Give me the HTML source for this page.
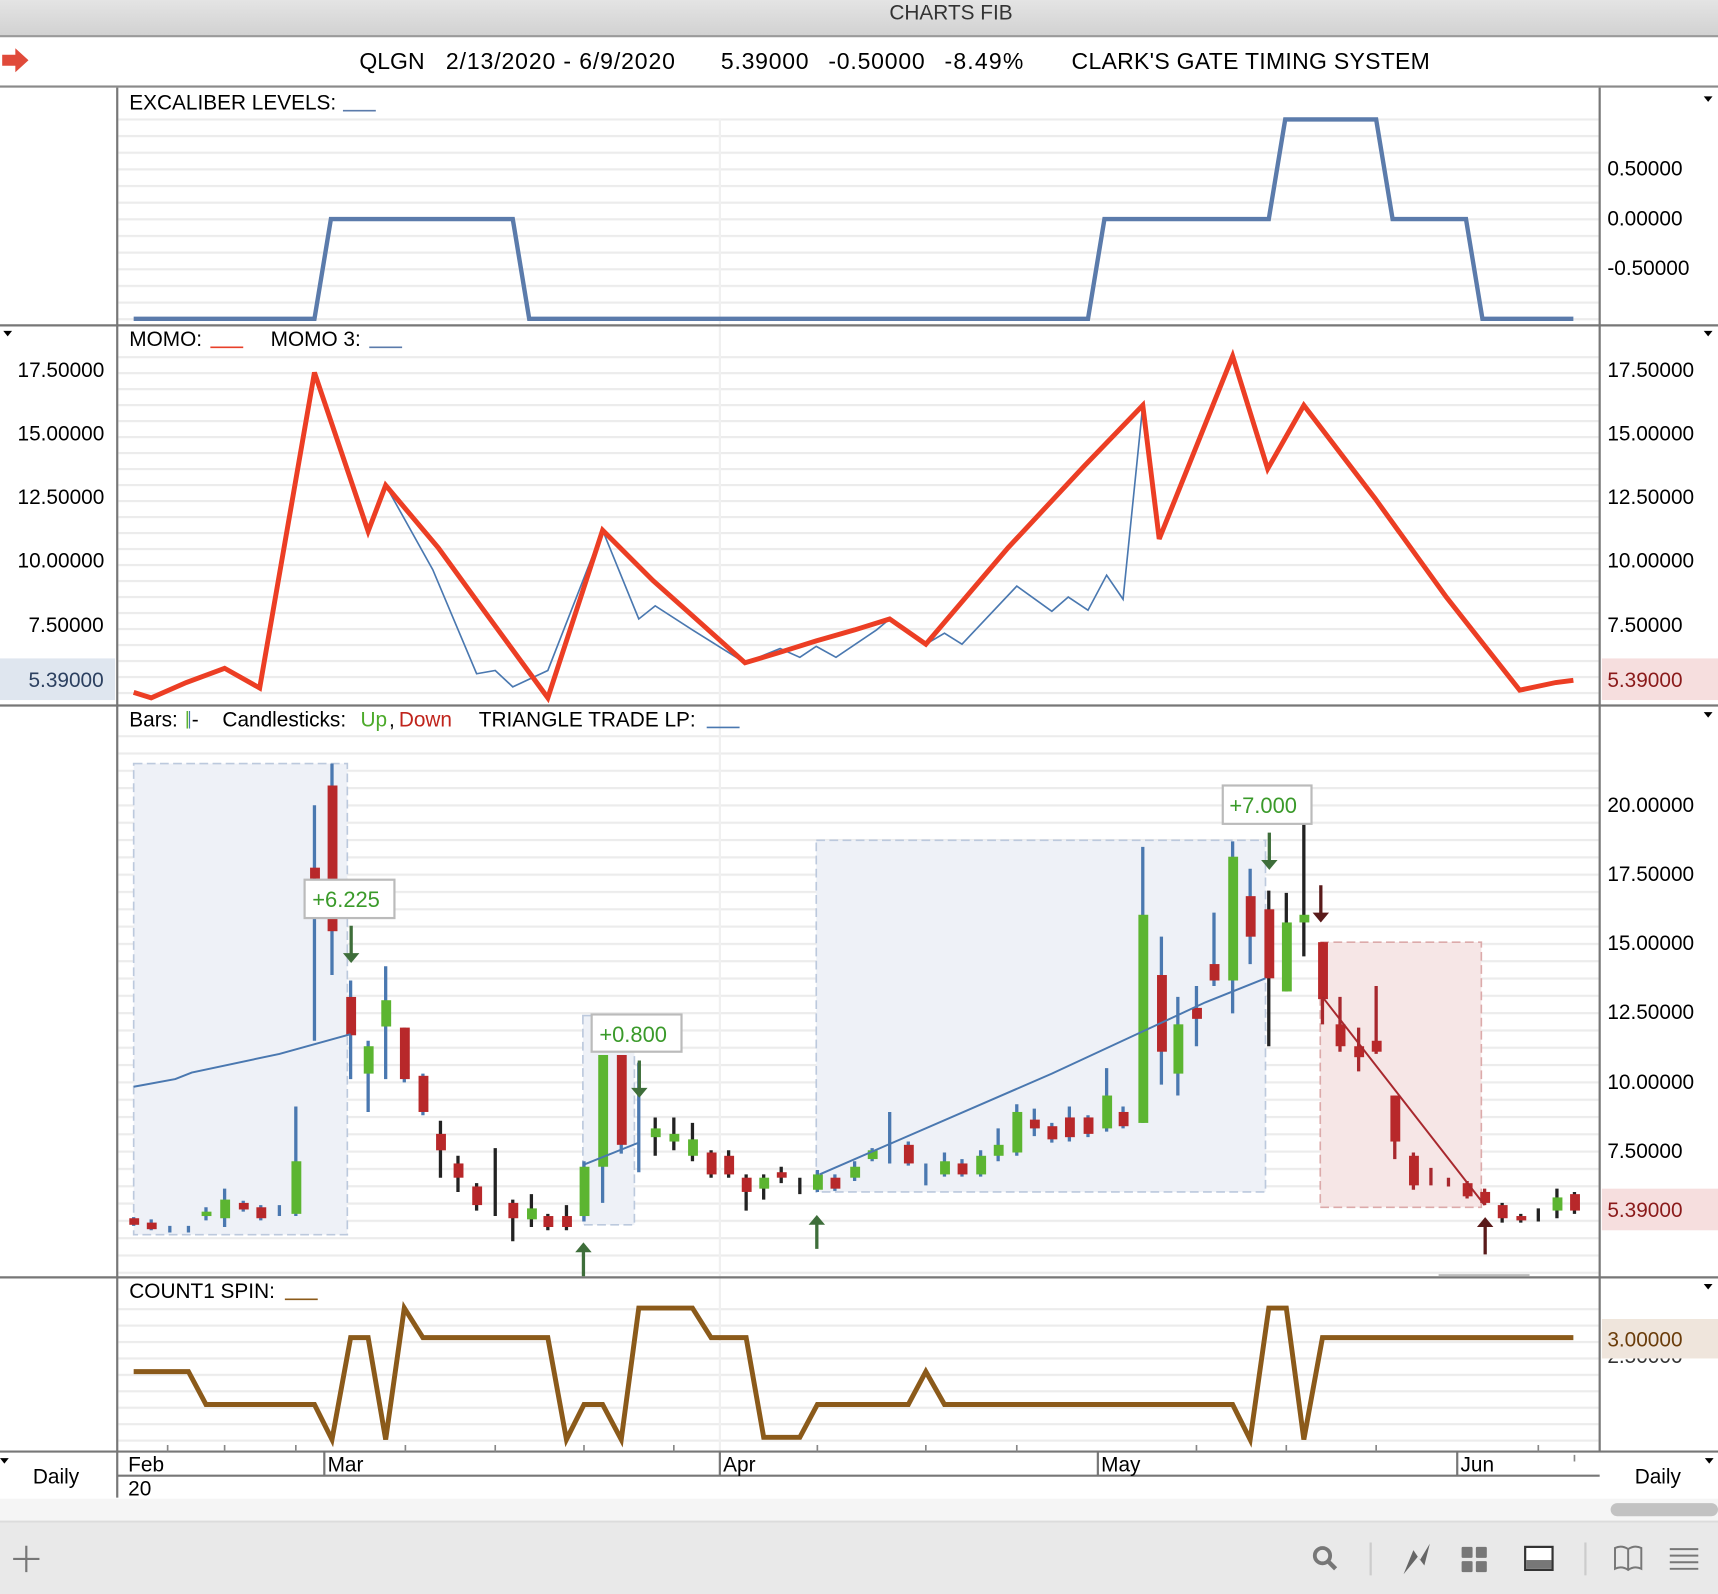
<!DOCTYPE html>
<html><head><meta charset="utf-8"><style>
html,body{margin:0;padding:0;background:#fff;overflow:hidden}
svg{display:block}
text{font-family:"Liberation Sans",sans-serif}
</style></head><body>
<svg width="1718" height="1594" viewBox="0 0 1568 1455" preserveAspectRatio="none" xmlns="http://www.w3.org/2000/svg">
<defs>
<linearGradient id="tb" x1="0" y1="0" x2="0" y2="1"><stop offset="0" stop-color="#e4e4e4"/><stop offset="1" stop-color="#d2d2d2"/></linearGradient>
<pattern id="g1" width="10" height="15.2" patternUnits="userSpaceOnUse" y="108"><rect width="10" height="2" fill="#ececec"/></pattern>
<pattern id="g2" width="10" height="14.6" patternUnits="userSpaceOnUse" y="325"><rect width="10" height="2" fill="#ececec"/></pattern>
<pattern id="g3" width="10" height="15.8" patternUnits="userSpaceOnUse" y="671"><rect width="10" height="2" fill="#ececec"/></pattern>
<pattern id="g4" width="10" height="15" patternUnits="userSpaceOnUse" y="1194"><rect width="10" height="2" fill="#ececec"/></pattern>
</defs>
<rect x="0" y="0" width="1568" height="32" fill="url(#tb)"/>
<text x="868" y="18" font-size="19" text-anchor="middle" fill="#333">CHARTS FIB</text>
<rect x="0" y="32" width="1568" height="2" fill="#9a9a9a"/>
<path d="M2 50h12v-6l12 11-12 11v-6H2z" fill="#e04a3a"/>
<g font-size="21" fill="#000">
<text x="328" y="63">QLGN</text>
<text x="407" y="63" textLength="209">2/13/2020 - 6/9/2020</text>
<text x="658" y="63" textLength="80">5.39000</text>
<text x="756" y="63" textLength="88">-0.50000</text>
<text x="862" y="63" textLength="72">-8.49%</text>
<text x="978" y="63" textLength="327">CLARK'S GATE TIMING SYSTEM</text>
</g>
<rect x="0" y="78" width="1568" height="2" fill="#8a8a8a"/>
<rect x="108" y="108" width="1351" height="185" fill="url(#g1)"/>
<rect x="108" y="325" width="1351" height="316" fill="url(#g2)"/>
<rect x="108" y="671" width="1351" height="492" fill="url(#g3)"/>
<rect x="108" y="1194" width="1351" height="130" fill="url(#g4)"/>
<path d="M657 108V1325" stroke="#f0f0f0" stroke-width="2"/>
<path d="M107 80V1367M1460 80V1325" stroke="#777" stroke-width="2"/>
<path d="M0 297H1568M0 644H1568M0 1166H1568" stroke="#777" stroke-width="2"/>
<path d="M0 1325H1568M107 1347H1460" stroke="#777" stroke-width="2"/>
<text x="118" y="100" font-size="19">EXCALIBER LEVELS:</text><path d="M313 101h30" stroke="#5b7bab" stroke-width="1.5"/>
<polyline fill="none" stroke="#5b7bab" stroke-width="4" points="122,291 287,291 302,200 468,200 483,291 993,291 1008,200 1158,200 1173,109 1256,109 1271,200 1338,200 1353,291 1436,291"/>
<text x="1467" y="160" font-size="19">0.50000</text><text x="1467" y="206" font-size="19">0.00000</text><text x="1467" y="251" font-size="19">-0.50000</text>
<path d="M1555 88h8l-4 5z" fill="#000"/>
<text x="118" y="316" font-size="19">MOMO:</text><path d="M192 317h30" stroke="#e8402a" stroke-width="1.5"/>
<text x="247" y="316" font-size="19">MOMO 3:</text><path d="M337 317h30" stroke="#5b7bab" stroke-width="1.5"/>
<path d="M3 302h8l-4 5z" fill="#000"/><path d="M1555 302h8l-4 5z" fill="#000"/>
<g font-size="19"><text x="16" y="344">17.50000</text><text x="16" y="402">15.00000</text><text x="16" y="460">12.50000</text><text x="16" y="518">10.00000</text><text x="26" y="577">7.50000</text>
<text x="1467" y="344">17.50000</text><text x="1467" y="402">15.00000</text><text x="1467" y="460">12.50000</text><text x="1467" y="518">10.00000</text><text x="1467" y="577">7.50000</text></g>
<rect x="0" y="601" width="105" height="38" fill="#dfe6ef"/><text x="26" y="627" font-size="19" fill="#2c4060">5.39000</text>
<rect x="1462" y="601" width="106" height="38" fill="#f6dede"/><text x="1467" y="627" font-size="19" fill="#8a1a1a">5.39000</text>
<polyline fill="none" stroke="#4a78b0" stroke-width="1.5" points="352,443 395,520 435,615 452,612 468,627 500,612 550,484 583,565 598,553 632,575 680,605 712,592 730,600 745,590 763,600 800,575 812,565 845,588 862,578 878,588 928,535 960,558 975,545 993,557 1010,525 1025,547 1043,370"/>
<polyline fill="none" stroke="#ec3e24" stroke-width="4.5" points="122,632 138,637 170,623 205,610 237,628 287,340 336,485 352,443 400,500 440,555 500,637 550,484 596,530 632,562 680,605 710,596 745,585 780,575 812,565 845,588 920,500 990,425 1043,370 1058,492 1125,325 1157,428 1190,370 1255,455 1320,545 1387,630 1420,623 1436,621"/>
<text x="118" y="663" font-size="19">Bars:</text><path d="M171 649v16" stroke="#5cb531" stroke-width="1.5"/><path d="M173 649v16" stroke="#4a78b0" stroke-width="1"/><text x="175" y="663" font-size="19">-</text>
<text x="203" y="663" font-size="19">Candlesticks:</text><text x="329" y="663" font-size="19" fill="#4caa2a">Up</text><text x="355" y="663" font-size="19">,</text><text x="364" y="663" font-size="19" fill="#c0241c">Down</text>
<text x="437" y="663" font-size="19">TRIANGLE TRADE LP:</text><path d="M645 664h30" stroke="#4a78b0" stroke-width="1.5"/>
<path d="M1555 650h8l-4 5z" fill="#000"/>
<g font-size="19"><text x="1467" y="741">20.00000</text><text x="1467" y="804">17.50000</text><text x="1467" y="867">15.00000</text><text x="1467" y="930">12.50000</text><text x="1467" y="994">10.00000</text><text x="1467" y="1057">7.50000</text></g>
<rect x="1462" y="1085" width="106" height="38" fill="#f6dede"/><text x="1467" y="1111" font-size="19" fill="#8a1a1a">5.39000</text>
<g stroke-dasharray="8 4" stroke-width="1.5">
<rect x="122" y="697" width="195" height="430" fill="#eef1f7" stroke="#bcc9dd"/>
<rect x="532" y="927" width="47" height="191" fill="#eef1f7" stroke="#bcc9dd"/>
<rect x="745" y="767" width="410" height="321" fill="#eef1f7" stroke="#bcc9dd"/>
<rect x="1205" y="860" width="147" height="242" fill="#f6e6e6" stroke="#dcaaaa"/>
</g>
<path d="M1313 1164h83" stroke="#bbb" stroke-width="2"/>
<g stroke-width="3" fill="none">
<path stroke="#4a78b0" d="M122 1111v8M138 1113v10M155 1119v6M172 1119v6M188 1102v12M205 1085v35M222 1096v10M238 1100v14M255 1100v10M270 1010v100M287 735v215M303 697v193M320 895v90M336 950v65M352 882v103M369 938v50M386 980v38M533 1060v55M550 963v135M567 963v90M583 970v100"/>
<path stroke="#222" d="M402 1023v52M418 1055v33M435 1080v25M452 1048v62M468 1095v38M485 1090v30M500 1108v15M517 1100v23M598 1020v35M615 1020v30M632 1025v35M649 1050v25M665 1050v25M681 1072v33M697 1072v23M713 1065v15M730 1075v15M1158 813v142M1174 815v90M1190 752v121M1371 1098v18M1388 1108v8M1404 1103v12M1421 1085v27M1437 1088v20"/>
<path stroke="#4a78b0" d="M746 1068v20M762 1072v15M780 1060v18M796 1048v12M812 1015v47M829 1042v22M845 1062v20M862 1052v22M878 1058v16M895 1050v24M911 1030v30M928 1008v47M944 1012v25M960 1025v18M976 1010v32M993 1018v20M1010 975v58M1025 1010v20M1043 773v252M1060 855v135M1075 910v90M1092 900v55M1108 833v67M1125 768v157M1141 793v87"/>
<path stroke="#a8282e" d="M1207 860v75M1223 910v50M1240 938v40M1256 900v62M1273 1000v58M1290 1052v34M1306 1066v16M1322 1075v8M1339 1078v16M1355 1085v15"/>
</g>
<g>
<rect x="118" y="1112" width="9" height="6" fill="#b8282a"/><rect x="134" y="1116" width="9" height="6" fill="#b8282a"/>
<rect x="184" y="1106" width="9" height="4" fill="#5cb531"/><rect x="201" y="1095" width="9" height="17" fill="#5cb531"/>
<rect x="218" y="1098" width="9" height="6" fill="#b8282a"/><rect x="234" y="1102" width="9" height="10" fill="#b8282a"/>
<rect x="266" y="1060" width="9" height="48" fill="#5cb531"/><rect x="283" y="792" width="9" height="10" fill="#b8282a"/>
<rect x="299" y="717" width="9" height="133" fill="#b8282a"/><rect x="316" y="910" width="9" height="35" fill="#b8282a"/>
<rect x="332" y="955" width="9" height="25" fill="#5cb531"/><rect x="348" y="913" width="9" height="24" fill="#5cb531"/>
<rect x="365" y="938" width="9" height="47" fill="#b8282a"/><rect x="382" y="982" width="9" height="33" fill="#b8282a"/>
<rect x="398" y="1035" width="9" height="15" fill="#b8282a"/><rect x="414" y="1062" width="9" height="13" fill="#b8282a"/>
<rect x="431" y="1083" width="9" height="17" fill="#b8282a"/><rect x="464" y="1098" width="9" height="14" fill="#b8282a"/>
<rect x="481" y="1103" width="9" height="10" fill="#5cb531"/><rect x="496" y="1110" width="9" height="10" fill="#b8282a"/>
<rect x="513" y="1110" width="9" height="10" fill="#b8282a"/><rect x="529" y="1065" width="9" height="45" fill="#5cb531"/>
<rect x="546" y="963" width="9" height="102" fill="#5cb531"/><rect x="563" y="963" width="9" height="82" fill="#b8282a"/>
<rect x="594" y="1030" width="9" height="8" fill="#5cb531"/><rect x="611" y="1035" width="9" height="7" fill="#5cb531"/>
<rect x="628" y="1040" width="9" height="15" fill="#5cb531"/><rect x="645" y="1052" width="9" height="20" fill="#b8282a"/>
<rect x="661" y="1055" width="9" height="17" fill="#b8282a"/><rect x="677" y="1075" width="9" height="13" fill="#b8282a"/>
<rect x="693" y="1075" width="9" height="10" fill="#5cb531"/><rect x="709" y="1070" width="9" height="5" fill="#b8282a"/>
<rect x="742" y="1072" width="9" height="14" fill="#5cb531"/><rect x="758" y="1075" width="9" height="10" fill="#b8282a"/>
<rect x="776" y="1065" width="9" height="10" fill="#5cb531"/><rect x="792" y="1050" width="9" height="8" fill="#5cb531"/>
<rect x="825" y="1045" width="9" height="17" fill="#b8282a"/><rect x="858" y="1060" width="9" height="12" fill="#5cb531"/>
<rect x="874" y="1062" width="9" height="10" fill="#b8282a"/><rect x="891" y="1055" width="9" height="17" fill="#5cb531"/>
<rect x="907" y="1045" width="9" height="10" fill="#5cb531"/><rect x="924" y="1015" width="9" height="37" fill="#5cb531"/>
<rect x="940" y="1022" width="9" height="8" fill="#b8282a"/><rect x="956" y="1028" width="9" height="12" fill="#b8282a"/>
<rect x="972" y="1020" width="9" height="18" fill="#b8282a"/><rect x="989" y="1020" width="9" height="15" fill="#b8282a"/>
<rect x="1006" y="1000" width="9" height="30" fill="#5cb531"/><rect x="1021" y="1015" width="9" height="13" fill="#b8282a"/>
<rect x="1039" y="835" width="9" height="190" fill="#5cb531"/><rect x="1056" y="890" width="9" height="70" fill="#b8282a"/>
<rect x="1071" y="935" width="9" height="45" fill="#5cb531"/><rect x="1088" y="920" width="9" height="10" fill="#b8282a"/>
<rect x="1104" y="880" width="9" height="15" fill="#b8282a"/><rect x="1121" y="782" width="9" height="113" fill="#5cb531"/>
<rect x="1137" y="818" width="9" height="37" fill="#b8282a"/><rect x="1154" y="830" width="9" height="63" fill="#b8282a"/>
<rect x="1170" y="842" width="9" height="63" fill="#5cb531"/><rect x="1186" y="835" width="9" height="7" fill="#5cb531"/>
<rect x="1203" y="860" width="9" height="52" fill="#b8282a"/><rect x="1219" y="935" width="9" height="20" fill="#b8282a"/>
<rect x="1236" y="955" width="9" height="10" fill="#b8282a"/><rect x="1252" y="950" width="9" height="10" fill="#b8282a"/>
<rect x="1269" y="1000" width="9" height="42" fill="#b8282a"/><rect x="1286" y="1055" width="9" height="27" fill="#b8282a"/>
<rect x="1335" y="1080" width="9" height="12" fill="#b8282a"/><rect x="1351" y="1088" width="9" height="10" fill="#b8282a"/>
<rect x="1367" y="1100" width="9" height="12" fill="#b8282a"/><rect x="1384" y="1110" width="9" height="4" fill="#b8282a"/>
<rect x="1417" y="1093" width="9" height="12" fill="#5cb531"/><rect x="1433" y="1090" width="9" height="15" fill="#b8282a"/>
</g>
<path d="M122 992 L160 985 L175 979 L255 962 L320 944M533 1063 L583 1043M748 1072 L960 980 L1100 915 L1155 893" stroke="#4a78b0" stroke-width="1.8" fill="none"/>
<path d="M1207 910 L1355 1100" stroke="#a8282e" stroke-width="1.8"/>
<g font-size="20" fill="#3a9a2a">
<rect x="278" y="803" width="82" height="35" fill="#fff" stroke="#bbb" stroke-width="2"/><text x="285" y="828">+6.225</text>
<rect x="540" y="926" width="82" height="34" fill="#fff" stroke="#bbb" stroke-width="2"/><text x="547" y="951">+0.800</text>
<rect x="1116" y="717" width="81" height="35" fill="#fff" stroke="#bbb" stroke-width="2"/><text x="1122" y="742">+7.000</text>
</g>
<g fill="#3e6e3a">
<path d="M319 845h3v25h6l-7.5 9l-7.5-9h6z"/><path d="M582 968h3v25h6l-7.5 9l-7.5-9h6z"/><path d="M1157 760h3v25h6l-7.5 9l-7.5-9h6z"/>
<path d="M531 1165h3v-22h6l-7.5-9l-7.5 9h6z"/><path d="M744 1140h3v-22h6l-7.5-9l-7.5 9h6z"/>
</g>
<g fill="#5a1a1a"><path d="M1204 808h3v25h6l-7.5 9l-7.5-9h6z"/><path d="M1354 1145h3v-25h6l-7.5-9l-7.5 9h6z"/></g>
<text x="118" y="1185" font-size="19">COUNT1 SPIN:</text><path d="M260 1186h30" stroke="#8b5a1a" stroke-width="1.5"/>
<path d="M1555 1172h8l-4 5z" fill="#000"/>
<text x="1467" y="1244" font-size="19" fill="#333">2.50000</text>
<rect x="1462" y="1204" width="106" height="36" fill="#efe5dc"/><text x="1467" y="1229" font-size="19" fill="#6a3c0a">3.00000</text>
<polyline fill="none" stroke="#8b5a1a" stroke-width="4.5" points="122,1252 172,1252 188,1282 287,1282 303,1314 320,1221 336,1221 352,1314 369,1194 386,1221 500,1221 517,1314 533,1282 550,1282 567,1314 583,1194 632,1194 649,1221 681,1221 697,1312 730,1312 746,1282 829,1282 845,1252 862,1282 1125,1282 1141,1314 1158,1194 1174,1194 1190,1314 1207,1221 1436,1221"/>
<path d="M296 1325v22M657 1325v22M1002 1325v22M1330 1325v22" stroke="#777" stroke-width="2"/>
<g stroke="#888" stroke-width="1.5"><path d="M153 1319v6M205 1319v6M270 1319v6M370 1319v6M452 1319v6M533 1319v6M615 1319v6M746 1319v6M845 1319v6M928 1319v6M1092 1319v6M1174 1319v6M1256 1319v6M1404 1319v6M1437 1328v6"/></g>
<g font-size="19"><text x="117" y="1343">Feb</text><text x="117" y="1365">20</text><text x="299" y="1343">Mar</text><text x="660" y="1343">Apr</text><text x="1005" y="1343">May</text><text x="1333" y="1343">Jun</text>
<text x="30" y="1354">Daily</text><text x="1492" y="1354">Daily</text></g>
<path d="M0 1331h8l-4 5z" fill="#000"/><path d="M1556 1331h8l-4 5z" fill="#000"/>
<rect x="0" y="1368" width="1568" height="22" fill="#f5f5f5"/><rect x="0" y="1388" width="1568" height="2" fill="#dcdcdc"/>
<rect x="1470" y="1372" width="98" height="12" rx="6" fill="#c2c2c2"/>
<rect x="0" y="1390" width="1568" height="65" fill="#e9e9e9"/>
<path d="M24 1411v24M12 1423h24" stroke="#777" stroke-width="2"/>
<circle cx="1207" cy="1420" r="7" fill="none" stroke="#777" stroke-width="3.5"/><path d="M1212 1425l7 7" stroke="#777" stroke-width="4"/>
<path d="M1251 1408v30M1447 1408v30" stroke="#ccc" stroke-width="2"/>
<path d="M1281 1437l9-22 6 9 9-15-5 20-6-8z" fill="#666"/>
<g fill="#777"><rect x="1334" y="1412" width="10" height="10" rx="1"/><rect x="1347" y="1412" width="10" height="10" rx="1"/><rect x="1334" y="1425" width="10" height="10" rx="1"/><rect x="1347" y="1425" width="10" height="10" rx="1"/></g>
<rect x="1392" y="1412" width="25" height="21" fill="#fff" stroke="#333" stroke-width="2"/><rect x="1393" y="1424" width="23" height="8" fill="#777"/>
<path d="M1474 1413q6-3 12 1q6-4 12-1v19q-6-3-12 1q-6-4-12-1z M1486 1414v19" fill="none" stroke="#777" stroke-width="1.8"/>
<path d="M1524 1414h26M1524 1420h26M1524 1426h26M1524 1432h26" stroke="#777" stroke-width="1.8"/>
</svg>
</body></html>
